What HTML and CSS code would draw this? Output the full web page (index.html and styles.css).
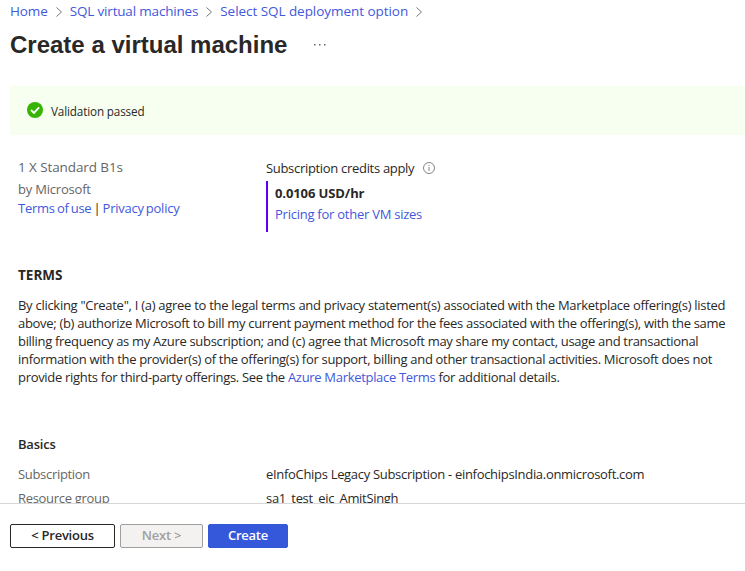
FILE: index.html
```html
<!DOCTYPE html>
<html lang="en">
<head>
<meta charset="utf-8">
<title>Create a virtual machine</title>
<link rel="stylesheet" href="styles.css">
</head>
<body>
<div class="page">
  <header>
    <nav class="crumbs">
      <a>Home</a><svg class="chev" viewBox="0 0 8 12"><path d="M1.5 1.5 6.5 6 1.5 10.5"/></svg>
      <a class="resource">SQL virtual machines</a><svg class="chev" viewBox="0 0 8 12"><path d="M1.5 1.5 6.5 6 1.5 10.5"/></svg>
      <a class="option">Select SQL deployment option</a><svg class="chev" viewBox="0 0 8 12"><path d="M1.5 1.5 6.5 6 1.5 10.5"/></svg>
    </nav>
    <div class="heading"><h1>Create a virtual machine</h1><svg class="more" viewBox="0 0 12 2"><path d="M0 0h1.5v1.5H0zM5 0h1.5v1.5H5zM10 0h1.5v1.5h-1.5z"/></svg></div>
  </header>
  <div class="banner">
    <svg class="check" viewBox="0 0 16 16"><circle cx="8" cy="8" r="8"/><path d="M4 8 7 10.9 12.1 5.3"/></svg>
    <span>Validation passed</span>
  </div>
  <main>
    <section class="offer">
      <div class="plan">
        <div class="plan-name">1 X Standard B1s</div>
        <div class="vendor">by Microsoft</div>
        <div class="legal"><a>Terms of use</a> | <a>Privacy policy</a></div>
      </div>
      <div class="cost">
        <div class="credits">Subscription credits apply<svg class="info" viewBox="0 0 12 12"><circle cx="6" cy="6" r="5.5"/><path d="M6 5v4M6 3v1"/></svg></div>
        <div class="price"><strong>0.0106 USD/hr</strong><a>Pricing for other VM sizes</a></div>
      </div>
    </section>
    <section class="terms">
      <h2>TERMS</h2>
      <p><span class="lead">By clicking "Create", I (a) agree to the legal terms and privacy statement(s) associated with the Marketplace offering(s) listed</span><br>above; (b) authorize Microsoft to bill my current payment method for the fees associated with the offering(s), with the same<br>billing frequency as my Azure subscription; and (c) agree that Microsoft may share my contact, usage and transactional<br>information with the provider(s) of the offering(s) for support, billing and other transactional activities. Microsoft does not<br>provide rights for third-party offerings. See the <a>Azure Marketplace Terms</a> for additional details.</p>
    </section>
    <section class="basics">
      <h3>Basics</h3>
      <dl><dt>Subscription</dt><dd>eInfoChips Legacy Subscription - einfochipsIndia.onmicrosoft.com</dd>
      <dt>Resource group</dt><dd>sa1_test_eic_AmitSingh</dd></dl>
    </section>
  </main>
  <footer>
    <button class="prev">&lt; Previous</button><button class="next" disabled>Next &gt;</button><button class="create">Create</button>
  </footer>
</div>
</body>
</html>
```
FILE: styles.css
```css
* { box-sizing: border-box; }
body { margin: 0; background: #fff; color: #292827; font: 13px/18px "Open Sans", sans-serif; letter-spacing: -0.31px; }
a { color: #3f58dc; }
h1, h2, h3, p, dl, dd { margin: 0; }
.page { height: 571px; display: flex; flex-direction: column; overflow: hidden; white-space: nowrap; }
header { height: 86px; flex: none; padding-left: 10px; }
.crumbs { display: flex; align-items: center; height: 22px; font-size: 13.5px; letter-spacing: -0.1px; }
.resource { letter-spacing: -0.18px; }
.option { letter-spacing: -0.05px; }
.chev { width: 8px; height: 12px; margin: 2px 7px 0; fill: none; stroke: #777; stroke-width: 1; }
.heading { display: flex; align-items: center; height: 43px; padding-top: 2px; }
h1 { font: bold 24px/30px "Liberation Sans", sans-serif; letter-spacing: 0; }
.more { width: 12px; height: 2px; margin-left: 27px; fill: #666; }
.banner { flex: none; height: 49px; margin-left: 10px; padding-left: 17px; display: flex; align-items: center; gap: 8px; background: #f6fff0; font-size: 11.7px; letter-spacing: -0.14px; }
.check { width: 16px; height: 16px; fill: #37b400; margin-top: -1px; }
.check path { fill: none; stroke: #fff; stroke-width: 1.8; }
main { flex: 1; min-height: 0; overflow: hidden; padding: 21px 0 0 18px; }
.offer { display: grid; grid-template-columns: 248px 1fr; height: 110px; }
.plan { color: #666; }
.plan-name { font-size: 13.5px; line-height: 22px; letter-spacing: -0.1px; }
.vendor { line-height: 20px; padding-top: 1px; letter-spacing: -0.2px; }
.legal { color: #292827; letter-spacing: -0.25px; word-spacing: -1px; }
.credits { display: flex; align-items: center; height: 25px; padding-bottom: 1px; }
.info { width: 12px; height: 12px; margin-left: 9px; fill: none; stroke: #777; stroke-width: 0.9; }
.price { display: flex; flex-direction: column; height: 51px; border-left: 2px solid #5c00f5; padding: 2px 0 0 7px; line-height: 21px; letter-spacing: -0.25px; }
.price strong { letter-spacing: -0.1px; }
h2 { font-size: 13.5px; line-height: 18px; letter-spacing: 0; }
.lead { letter-spacing: -0.28px; }
.terms p { padding-top: 12px; height: 150px; }
h3 { font-size: 13px; line-height: 20px; margin-bottom: 8px; font-weight: 600; letter-spacing: -0.2px; }
dl { display: grid; grid-template-columns: 248px 1fr; line-height: 24px; }
dt { color: #666; }
footer { flex: none; height: 68px; border-top: 1px solid #d6d6d6; display: flex; gap: 5px; padding: 20px 10px; }
button { height: 24px; padding: 0 0 2px; border: 1px solid #292827; border-radius: 2px; background: #fff; color: #292827; font: 600 13px/20px "Open Sans", sans-serif; letter-spacing: -0.25px; }
.prev { width: 105px; }
.next { width: 83px; background: #f3f2f1; border-color: #a19f9d; color: #a19f9d; }
.create { width: 80px; background: #3558db; border-color: #3558db; color: #fff; }
```
